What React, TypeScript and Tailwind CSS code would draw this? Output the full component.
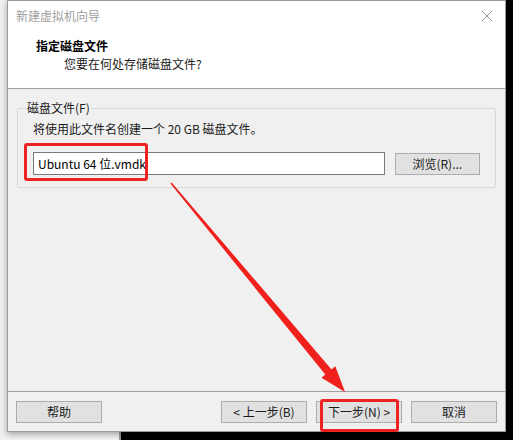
import React from "react";

const font = { fontFamily: '"Noto Sans CJK SC", "Microsoft YaHei", sans-serif' };

function WinButton({ children, className = "" }: { children: React.ReactNode; className?: string }) {
  return (
    <div
      className={`flex h-[22px] w-[86px] items-center justify-center border border-[#adadad] bg-[#e1e1e1] text-[12px] text-[#1a1a1a] ${className}`}
    >
      {children}
    </div>
  );
}

export default function App() {
  return (
    <div className="relative h-[440px] w-[513px] overflow-hidden bg-black" style={font}>
      {/* window behind the wizard */}
      <div className="absolute left-0 top-0 h-[440px] w-[121px] border-r-2 border-[#9a9a9a] bg-[#f0f0f0]" />

      {/* wizard dialog */}
      <div className="absolute left-[7px] top-0 flex h-[432px] w-[499px] flex-col border border-[#9c9c9c] bg-[#f0f0f0] shadow-[0_2px_6px_rgba(0,0,0,0.35)]">
        {/* title bar */}
        <div className="flex h-[30px] items-center justify-between bg-white pl-[8px] pr-[12px]">
          <span className="text-[12px] text-[#a0a0a0]">新建虚拟机向导</span>
          <svg width="12" height="12" viewBox="0 0 12 12">
            <path d="M1 1L11 11M11 1L1 11" stroke="#9a9a9a" strokeWidth="1" />
          </svg>
        </div>

        {/* header */}
        <div className="flex h-[57px] flex-col bg-white pl-[28px] pt-[6px]">
          <span className="text-[12px] font-bold leading-[18px] text-black">指定磁盘文件</span>
          <span className="pl-[28px] text-[12px] leading-[17px] text-[#1a1a1a]">您要在何处存储磁盘文件?</span>
        </div>
        <div className="h-px bg-[#a0a0a0]" />

        {/* body */}
        <div className="flex flex-1 flex-col px-[9px] pt-[19px]">
          <div className="relative h-[80px] rounded-[2px] border border-[#d9d9d9] px-[15px] pt-[11px]">
            <span className="absolute left-[8px] top-[-10px] bg-[#f0f0f0] px-[1px] text-[12px] leading-[18px] text-[#1a1a1a]">
              磁盘文件(F)
            </span>
            <div className="text-[12px] leading-[18px] text-[#1a1a1a]">将使用此文件名创建一个 20 GB 磁盘文件。</div>
            <div className="mt-[14px] flex items-center">
              <div className="flex h-[23px] w-[354px] items-center border border-[#7a7a7a] bg-white pl-[4px] text-[12px] text-black">
                Ubuntu 64 位.vmdk
              </div>
              <WinButton className="ml-[10px] w-[84px]">浏览(R)...</WinButton>
            </div>
          </div>
        </div>

        {/* footer */}
        <div className="h-px bg-[#a0a0a0]" />
        <div className="flex h-[39px] items-start pl-[8px] pr-[8px] pt-[9px]">
          <WinButton>帮助</WinButton>
          <div className="flex-1" />
          <WinButton>&lt; 上一步(B)</WinButton>
          <WinButton className="ml-[9px]">下一步(N) &gt;</WinButton>
          <WinButton className="ml-[9px]">取消</WinButton>
        </div>
      </div>

      {/* highlight marks */}
      <div className="absolute left-[24px] top-[143px] h-[38px] w-[124px] rounded-[3px] border-[3px] border-[#ec2323]" />
      <div className="absolute left-[320px] top-[399px] h-[33px] w-[79px] rounded-[3px] border-[3px] border-[#ec2323]" />
      <svg className="absolute left-0 top-0" width="513" height="440" viewBox="0 0 513 440">
        <polygon
          points="170.4,183.5 325.3,374.6 321.5,377.8 345,392 335.3,366.2 331.5,369.4 171.6,182.5"
          fill="#f0201c"
        />
      </svg>
    </div>
  );
}
